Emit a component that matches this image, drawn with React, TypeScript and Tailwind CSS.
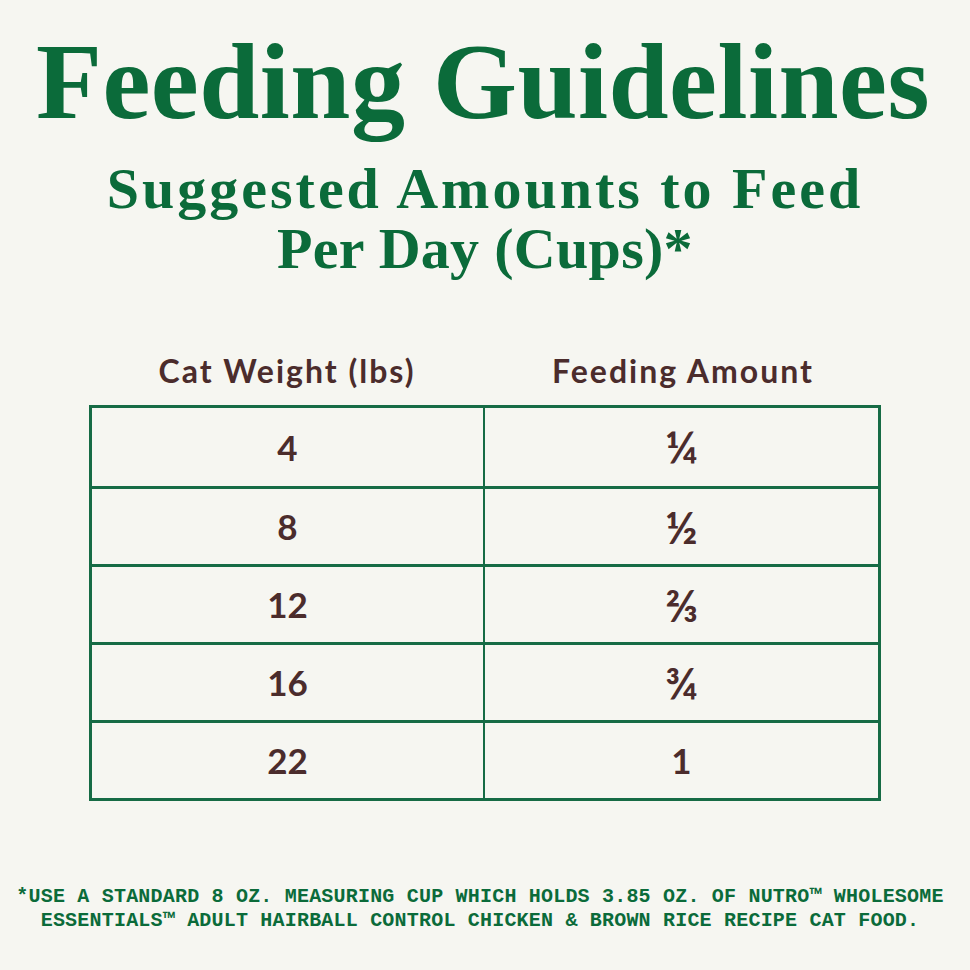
import React from "react";

const rows = [
  { weight: "4", amount: "¼" },
  { weight: "8", amount: "½" },
  { weight: "12", amount: "⅔" },
  { weight: "16", amount: "¾" },
  { weight: "22", amount: "1" },
];

const serif = "font-['Liberation_Serif',serif]";
const sans = "font-['Lato',sans-serif]";

const App = () => {
  return (
    <div className="w-[970px] h-[970px] bg-[#f6f6f1] flex flex-col items-center overflow-hidden">
      <h1
        className={`${serif} mt-[22px] ml-[-4px] text-[108px] leading-[120px] font-bold text-[#0b6b3a] tracking-[0.5px]`}
      >
        Feeding Guidelines
      </h1>
      <h2
        className={`${serif} mt-[17px] text-[58px] leading-[60px] font-bold text-[#0b6b3a] text-center`}
      >
        <span className="tracking-[3px]">Suggested Amounts to Feed</span>
        <br />
        <span className="tracking-[0.3px]">Per Day (Cups)*</span>
      </h2>

      <div className="mt-[72px] w-[792px]">
        <div
          className={`${sans} grid grid-cols-2 text-[32px] leading-[40px] font-bold text-[#4b2c2c] tracking-[2px] text-center pb-[14px]`}
        >
          <div>Cat Weight (lbs)</div>
          <div>Feeding Amount</div>
        </div>
        <div className="border-[3px] border-[#166b45]">
          {rows.map((row, i) => (
            <div
              key={row.weight}
              className={`grid grid-cols-2 h-[78px] ${
                i > 0 ? "border-t-[3px] border-[#166b45]" : ""
              }`}
            >
              <div
                className={`${sans} flex items-center justify-center border-r-2 border-[#166b45] text-[35px] font-bold text-[#4b2c2c]`}
              >
                {row.weight}
              </div>
              <div
                className={`${sans} flex items-center justify-center ${
                  row.amount === "1" ? "text-[35px]" : "text-[44px]"
                } font-bold text-[#4b2c2c]`}
              >
                {row.amount}
              </div>
            </div>
          ))}
        </div>
      </div>

      <p className="mt-[84px] mr-[10px] font-['Liberation_Mono',monospace] text-[20px] leading-[24px] font-bold text-[#0b6b3a] text-center tracking-[0.2px] whitespace-nowrap">
        *USE A STANDARD 8 OZ. MEASURING CUP WHICH HOLDS 3.85 OZ. OF NUTRO™ WHOLESOME
        <br />
        ESSENTIALS™ ADULT HAIRBALL CONTROL CHICKEN &amp; BROWN RICE RECIPE CAT FOOD.
      </p>
    </div>
  );
};

export default App;
